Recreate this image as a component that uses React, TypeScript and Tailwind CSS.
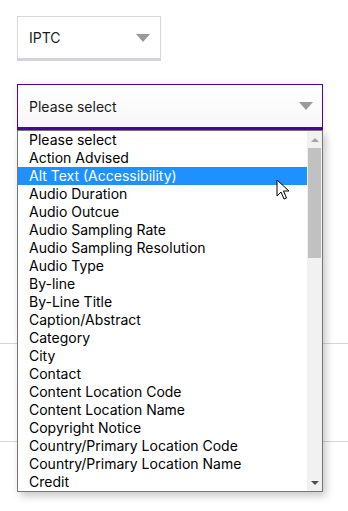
import React from 'react';

const items = [
    'Please select',
    'Action Advised',
    'Alt Text (Accessibility)',
    'Audio Duration',
    'Audio Outcue',
    'Audio Sampling Rate',
    'Audio Sampling Resolution',
    'Audio Type',
    'By-line',
    'By-Line Title',
    'Caption/Abstract',
    'Category',
    'City',
    'Contact',
    'Content Location Code',
    'Content Location Name',
    'Copyright Notice',
    'Country/Primary Location Code',
    'Country/Primary Location Name',
    'Credit',
];

const Caret = () => (
    <svg width="14" height="8" viewBox="0 0 14 8" className="shrink-0">
        <path d="M0 0 H14 L7 8 Z" fill="#9a9a9a" />
    </svg>
);

const Pointer = () => (
    <svg width="16" height="22" viewBox="0 0 16 22" className="absolute left-[276px] top-[179px]">
        <path d="M1 1 L1 17 L5 13 L8 20 L10.5 19 L7.5 12 L13 12 Z" fill="#fff" stroke="#000" strokeWidth="1" strokeLinejoin="round" />
    </svg>
);

export default function App() {
    const selected = 2;

    return (
        <div className="relative w-[348px] h-[511px] bg-white overflow-hidden" style={{ fontFamily: 'Inter, "Noto Sans", sans-serif' }}>
            <div className="pt-4 pl-[17px] flex flex-col">
                <div className="w-[144px] h-[45px] flex items-center justify-between pl-[11px] pr-[10px] bg-white border border-[#d8d6e0] border-b-[3px] border-b-[#d4d2dc] text-[14px] text-[#1a1a1a]">
                    <span>IPTC</span>
                    <Caret />
                </div>
                <div className="mt-[23px] w-[306px] h-[46px] flex items-center justify-between pl-[11px] pr-[9px] bg-gradient-to-b from-white to-[#f7f7f7] border border-[#4a06a0] border-b-[3px] shadow-[0_0_8px_rgba(0,0,0,0.08)] text-[14px] text-[#1a1a1a]">
                    <span>Please select</span>
                    <Caret />
                </div>
            </div>

            <div className="mt-[213px] h-px bg-[#d6d3e2]" />
            <div className="mt-[97px] h-px bg-[#d6d3e2]" />

            <div className="absolute left-[17px] top-[130px] w-[306px] h-[362px] flex bg-white border border-[#767676] shadow-[3px_4px_8px_rgba(0,0,0,0.22)]">
                <ul className="flex-1 flex flex-col text-[14px] leading-[18px] text-black">
                    {items.map((item, i) => (
                        <li
                            key={item}
                            className={`h-[18px] pl-[11px] whitespace-nowrap ${i === selected ? 'bg-[#1e90ff] text-white' : ''}`}
                        >
                            {item}
                        </li>
                    ))}
                </ul>
                <div className="w-[15px] bg-[#f1f1f1] flex flex-col items-center">
                    <div className="h-[17px] flex items-center justify-center">
                        <svg width="8" height="4" viewBox="0 0 8 4"><path d="M0 4 L4 0 L8 4 Z" fill="#a3a3a3" /></svg>
                    </div>
                    <div className="w-[13px] h-[110px] bg-[#c1c1c1]" />
                    <div className="flex-1" />
                    <div className="h-[17px] flex items-center justify-center">
                        <svg width="8" height="4" viewBox="0 0 8 4"><path d="M0 0 L8 0 L4 4 Z" fill="#505050" /></svg>
                    </div>
                </div>
            </div>

            <Pointer />
        </div>
    );
}
